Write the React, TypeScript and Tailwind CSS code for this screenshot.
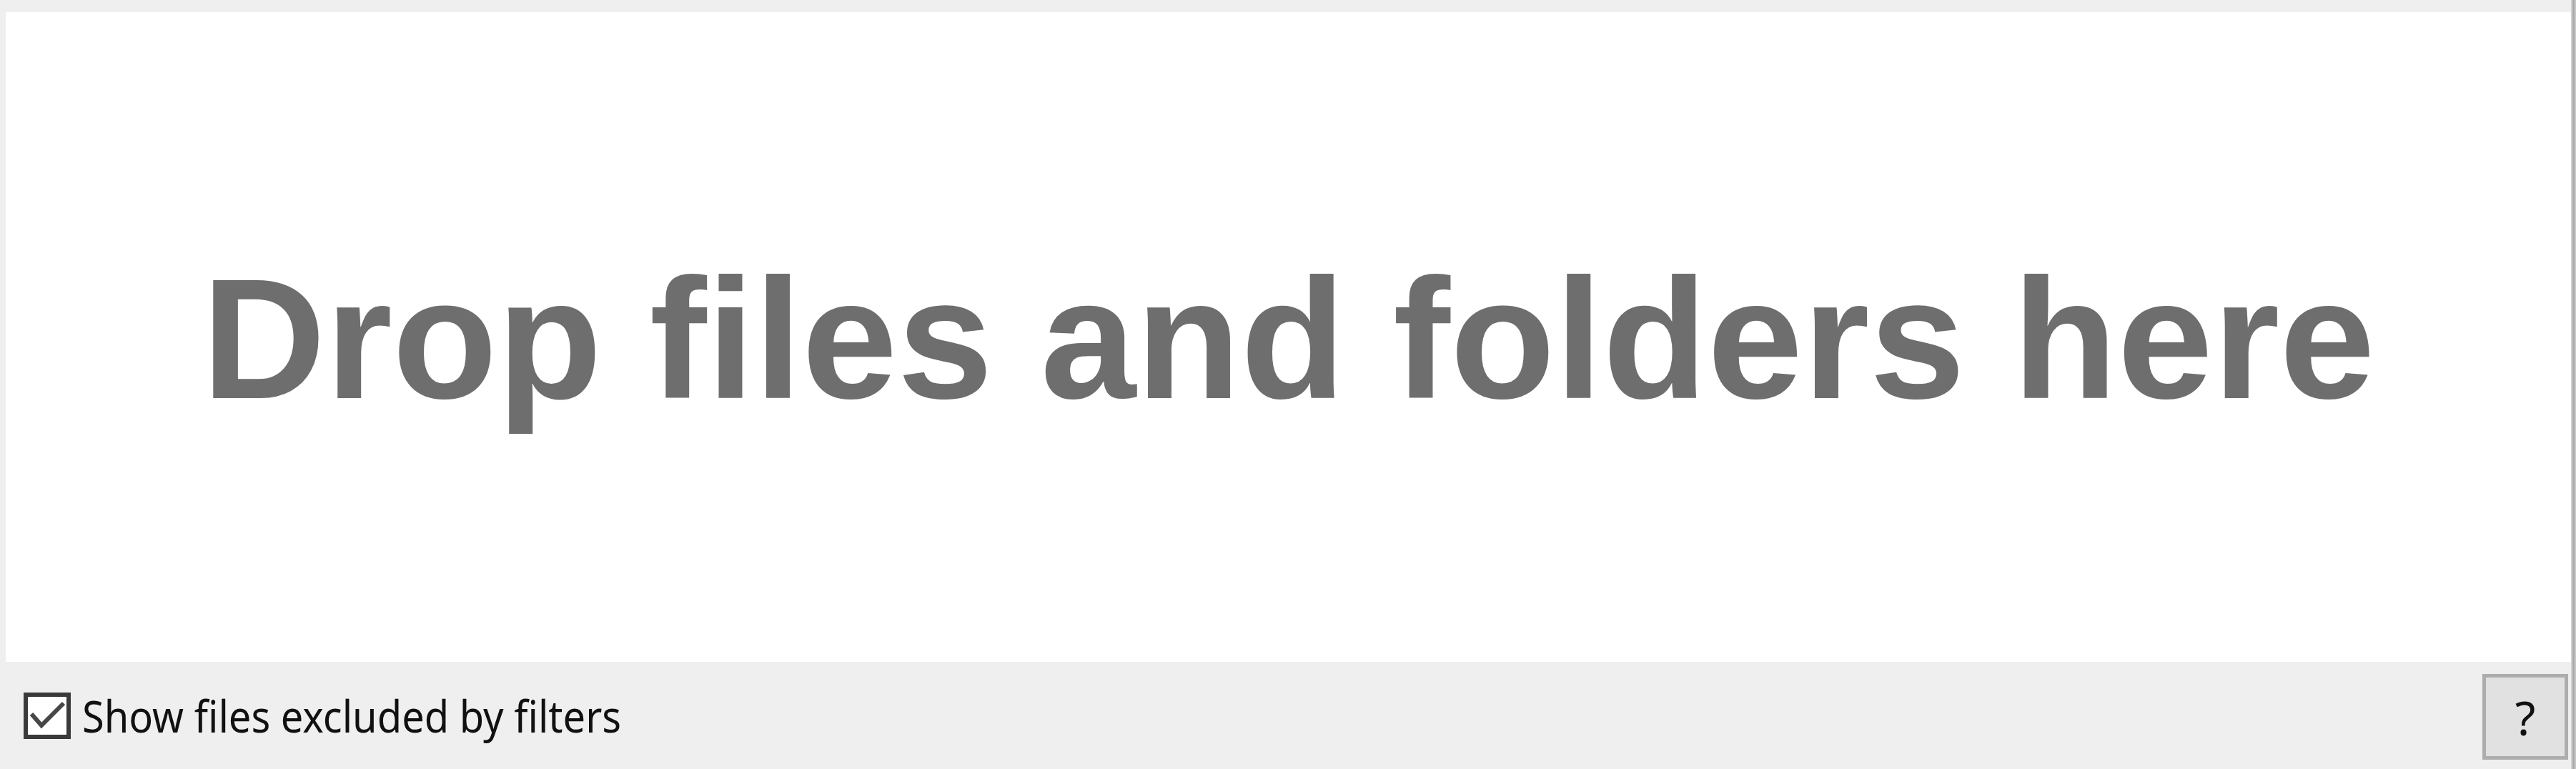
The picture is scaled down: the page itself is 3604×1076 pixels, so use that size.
export default function App() {
  return (
    <div className="flex h-[1076px] w-full bg-[#efefef]" style={{ fontFamily: '"Noto Sans", "Open Sans", sans-serif' }}>
      <div className="flex min-w-0 flex-1 flex-col pt-[17px] pl-[8px]">
        {/* Drop zone */}
        <div className="flex h-[909px] items-center justify-center bg-white">
          <span
            className="pt-[5px] text-[240px] font-bold leading-none whitespace-nowrap text-[#6e6e6e]"
            style={{ fontFamily: '"Liberation Sans", Arial, sans-serif' }}
          >
            Drop files and folders here
          </span>
        </div>

        {/* Bottom bar */}
        <div className="flex h-[150px] items-center justify-between pl-[25px] pr-[4px]">
          <label className="flex items-center gap-[16px]">
            <span className="flex h-[65px] w-[66px] items-center justify-center border-[6px] border-[#3a3a3a] bg-white">
              <svg viewBox="0 0 54 53" className="h-[53px] w-[54px]">
                <path d="M5 24 L19 40 L50 9" fill="none" stroke="#474747" strokeWidth="6" />
              </svg>
            </span>
            <span className="text-[56px] leading-none text-[#111] scale-y-110">Show files excluded by filters</span>
          </label>
          <button className="mt-[4px] flex h-[120px] w-[120px] items-center justify-center border-[5px] border-[#adadad] bg-[#e1e1e1] text-[66px] leading-none text-[#111]">
            ?
          </button>
        </div>
      </div>
      <div className="w-[7px] bg-linear-to-r from-[#dcdcdc] via-[#a9a9a9] to-[#cfcfcf]" />
    </div>
  );
}
